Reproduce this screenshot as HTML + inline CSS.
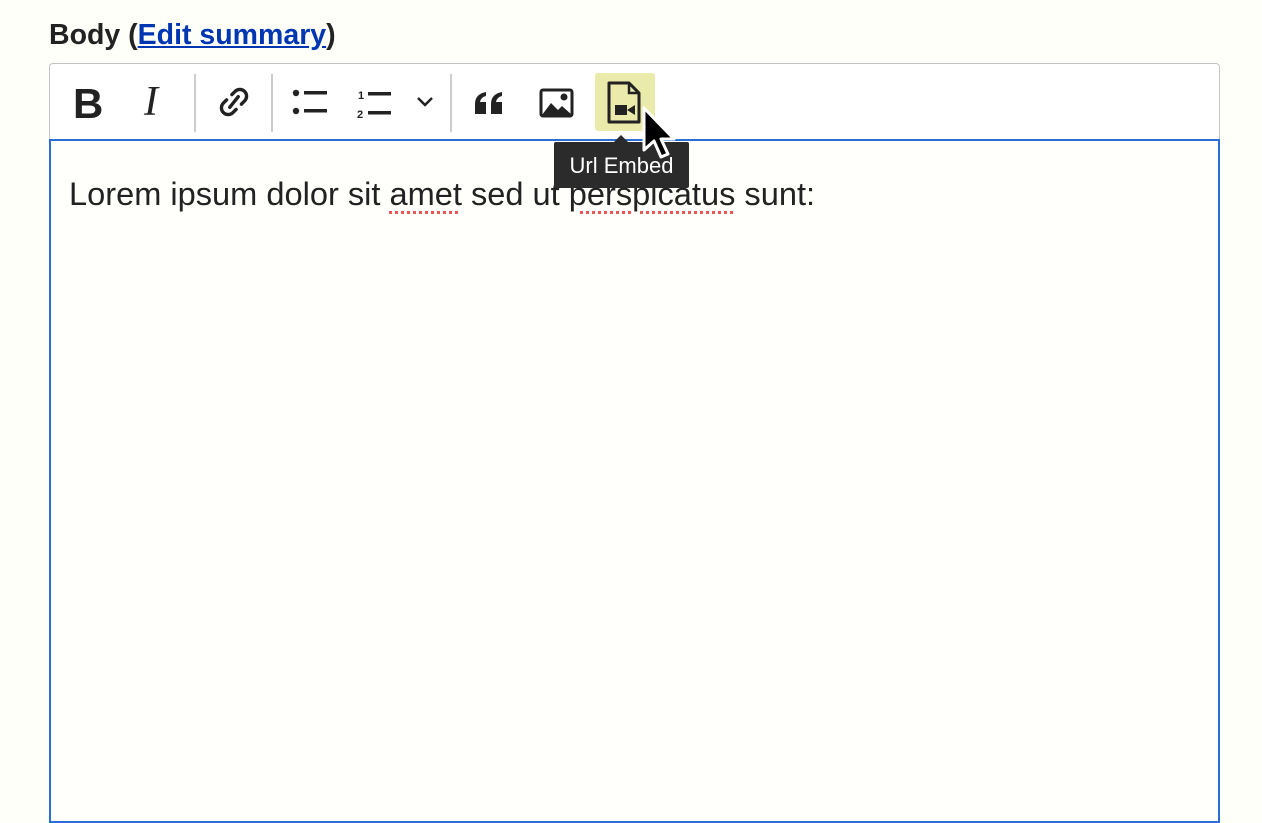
<!DOCTYPE html>
<html><head><meta charset="utf-8"><style>
html,body{margin:0;padding:0;width:1262px;height:792px;overflow:hidden;background:#fffffa;font-family:"Liberation Sans",sans-serif;}
.label{position:absolute;left:49px;top:19px;font-size:28.5px;font-weight:bold;color:#222;}
.label a{color:#0036b1;text-decoration:underline;}
.tb{position:absolute;left:49px;top:63px;width:1169px;height:76px;border:1px solid #c4c4c4;border-bottom:none;border-radius:4px 4px 0 0;background:#fff;}
.ed{position:absolute;left:49px;top:139px;width:1167px;height:680px;border:2px solid #2a6fd6;background:#fffffc;}
.sep{position:absolute;top:10px;width:2px;height:58px;background:#ccc;}
.ic{position:absolute;}
.text{position:absolute;left:69px;top:175px;font-size:32.6px;color:#222;}
.sp{text-decoration:underline dotted #e55;text-underline-offset:6px;text-decoration-thickness:3px;}
.tip{position:absolute;left:554px;top:142px;width:135px;height:46px;background:#2b2b2b;color:#fff;font-size:22px;line-height:48px;text-align:center;border-radius:2px;}
.tip:before{content:"";position:absolute;left:60px;top:-7px;border:7px solid transparent;border-top:none;border-bottom-color:#2b2b2b;}
</style></head><body>
<div class="label">Body (<a>Edit summary</a>)</div>
<div class="tb">
  <div class="ic" style="left:23px;top:16px;font-size:42px;font-weight:bold;color:#222;">B</div>
  <div class="ic" style="left:94px;top:14px;font-size:42px;font-style:italic;font-family:'Liberation Serif',serif;color:#222;">I</div>
  <div class="sep" style="left:144px"></div>
  <svg class="ic" style="left:166px;top:20px" width="36" height="36" viewBox="0 0 34 34"><g fill="none" stroke="#222" stroke-width="3.2" stroke-linecap="round"><path d="M13 22 L21 12"/><path d="M15 10 l3-3 a5.5 5.5 0 0 1 9 9 l-3 3"/><path d="M19 24 l-3 3 a5.5 5.5 0 0 1 -9 -9 l3 -3"/></g></svg>
  <div class="sep" style="left:221px"></div>
  <svg class="ic" style="left:241px;top:24px" width="40" height="30" viewBox="0 0 40 30"><circle cx="5" cy="5" r="3.2" fill="#222"/><circle cx="5" cy="23" r="3.2" fill="#222"/><rect x="13" y="3" width="23" height="3.5" fill="#222"/><rect x="13" y="21" width="23" height="3.5" fill="#222"/></svg>
  <svg class="ic" style="left:306px;top:22px" width="42" height="34" viewBox="0 0 42 34"><text x="2" y="13" font-size="11" font-weight="bold" font-family="Liberation Sans" fill="#222">1</text><text x="1" y="32" font-size="11" font-weight="bold" font-family="Liberation Sans" fill="#222">2</text><rect x="12" y="6" width="23" height="3.5" fill="#222"/><rect x="12" y="25" width="23" height="3.5" fill="#222"/></svg>
  <svg class="ic" style="left:366px;top:32px" width="18" height="12" viewBox="0 0 18 12"><path d="M2 2 L9 9 L16 2" fill="none" stroke="#222" stroke-width="2.5"/></svg>
  <div class="sep" style="left:400px"></div>
  <svg class="ic" style="left:423px;top:28px" width="32" height="24" viewBox="0 0 32 24"><path d="M2 12 q0-10 11-12 v4 q-5 1-6 6 h6 v12 h-11z M18 12 q0-10 11-12 v4 q-5 1-6 6 h6 v12 h-11z" fill="#222"/></svg>
  <svg class="ic" style="left:489px;top:24px" width="36" height="30" viewBox="0 0 36 30"><rect x="2" y="2" width="31" height="26" rx="2" fill="none" stroke="#222" stroke-width="3"/><circle cx="25" cy="9" r="3.5" fill="#222"/><path d="M3 27 L12 15 L19 22 L23 18 L33 27Z" fill="#222"/></svg>
  <div class="ic" style="left:545px;top:9px;width:60px;height:58px;background:#eaeaaa;border-radius:3px;"></div>
  <svg class="ic" style="left:555px;top:17px" width="38" height="44" viewBox="0 0 38 44"><path d="M4 2 h20 l10 10 v29 h-30z" fill="none" stroke="#222" stroke-width="3" stroke-linejoin="round"/><path d="M24 2 v10 h10" fill="none" stroke="#222" stroke-width="2.5"/><rect x="10" y="24" width="12" height="10" fill="#222"/><path d="M22 29 l8-5 v10z" fill="#222"/></svg>
</div>
<div class="ed"></div>
<div class="text">Lorem ipsum dolor sit <span class="sp">amet</span> sed ut <span class="sp">perspicatus</span> sunt:</div>
<div class="tip">Url Embed</div>
<svg style="position:absolute;left:640px;top:106px" width="40" height="60" viewBox="0 0 40 60"><path d="M4 2 V44 L14 35 L21 51 L28 48 L21 33 L34 33 Z" fill="#000" stroke="#fff" stroke-width="3" stroke-linejoin="round"/></svg>
</body></html>
